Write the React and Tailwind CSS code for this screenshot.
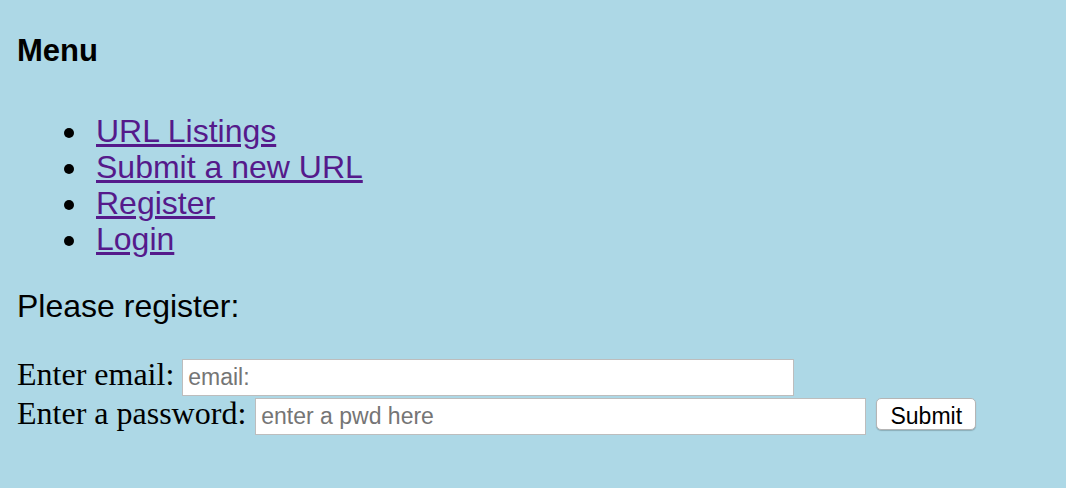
import React from "react";

const links = ["URL Listings", "Submit a new URL", "Register", "Login"];

export default function App() {
  return (
    <div className="min-h-screen bg-[#add8e6] px-[17px] pt-[33px] font-['Liberation_Sans',Arial,sans-serif] text-black">
      <h3 className="text-[31px] font-bold leading-[36px]">Menu</h3>
      <ul className="mt-[44px]">
        {links.map((l) => (
          <li key={l} className="flex items-start text-[32px] leading-[36px]">
            <span className="mt-[15px] ml-[47px] mr-[22px] h-[10px] w-[10px] rounded-full bg-black" />
            <a href="#" className="text-[#551a8b] underline">
              {l}
            </a>
          </li>
        ))}
      </ul>
      <p className="mt-[31px] text-[32px] leading-[36px]">Please register:</p>
      <form className="mt-[35px]" onSubmit={(e) => e.preventDefault()}>
        <div className="flex items-baseline">
          <label className="font-['Liberation_Serif','Times_New_Roman',serif] text-[32px] leading-[30px]">
            Enter email:
          </label>
          <input
            type="text"
            placeholder="email:"
            className="ml-[8px] h-[37px] w-[612px] border border-[#bdbdbd] bg-white px-[5px] text-[23px] text-black outline-none placeholder:text-[#757575]"
          />
        </div>
        <div className="mt-[1px] flex items-baseline">
          <label className="font-['Liberation_Serif','Times_New_Roman',serif] text-[32px] leading-[30px]">
            Enter a password:
          </label>
          <input
            type="password"
            placeholder="enter a pwd here"
            className="ml-[9px] h-[37px] w-[611px] border border-[#bdbdbd] bg-white px-[5px] text-[23px] text-black outline-none placeholder:text-[#757575]"
          />
          <button
            type="submit"
            className="ml-[10px] mt-[1px] h-[32px] w-[100px] rounded-[5px] border border-[#b5b5b5] bg-white text-[23px] text-black shadow-[0_1px_1px_rgba(0,0,0,0.2)]"
          >
            Submit
          </button>
        </div>
      </form>
    </div>
  );
}
